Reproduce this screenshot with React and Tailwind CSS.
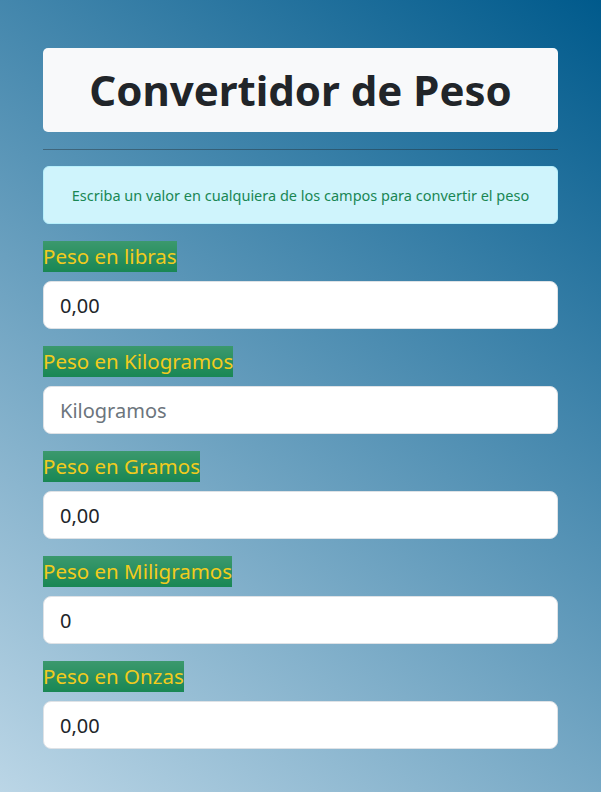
import React, { useState } from 'react';

const campos = [
    { id: 'libras', label: 'Peso en libras', value: '0,00', placeholder: 'Libras' },
    { id: 'kilogramos', label: 'Peso en Kilogramos', value: '', placeholder: 'Kilogramos' },
    { id: 'gramos', label: 'Peso en Gramos', value: '0,00', placeholder: 'Gramos' },
    { id: 'miligramos', label: 'Peso en Miligramos', value: '0', placeholder: 'Miligramos' },
    { id: 'onzas', label: 'Peso en Onzas', value: '0,00', placeholder: 'Onzas' },
];

const App = () => {
    const [valores, setValores] = useState(
        Object.fromEntries(campos.map((c) => [c.id, c.value]))
    );

    const handleChange = (id) => (e) => {
        setValores({ ...valores, [id]: e.target.value });
    };

    return (
        <div className="min-h-screen w-full bg-[linear-gradient(37deg,#bdd7e7_0%,#005a8c_100%)] font-['Segoe_UI','Noto_Sans',sans-serif] text-[#212529]">
            <div className="px-[43px] pt-[48px] pb-[40px]">
                {/* Encabezado */}
                <div className="flex h-[84px] items-center justify-center rounded-[5px] bg-[#f8f9fa]">
                    <h1 className="text-[42px] font-bold leading-none text-[#212529]">Convertidor de Peso</h1>
                </div>

                <hr className="mt-[17px] mb-4 border-t border-[#212529]/40" />

                {/* Mensaje */}
                <div className="mb-[17px] rounded-[6px] border border-[#b6effb] bg-[#cff4fc] py-4 text-center text-[14.5px] leading-6 text-[#198754]">
                    Escriba un valor en cualquiera de los campos para convertir el peso
                </div>

                {/* Campos */}
                {campos.map((campo) => (
                    <div key={campo.id} className="mb-[17px]">
                        <label
                            htmlFor={campo.id}
                            className="mb-[9px] inline-block h-[31px] bg-[#198754] bg-[linear-gradient(180deg,rgba(255,255,255,0.15),rgba(255,255,255,0))] text-[20.5px] leading-[31px] text-[#f2cb1d]"
                        >
                            {campo.label}
                        </label>
                        <input
                            id={campo.id}
                            type="text"
                            value={valores[campo.id]}
                            placeholder={campo.placeholder}
                            onChange={handleChange(campo.id)}
                            className="block h-[48px] w-full rounded-lg border border-[#dee2e6] bg-white px-4 text-[20px] text-[#212529] outline-none placeholder:text-[#6c757d]"
                        />
                    </div>
                ))}
            </div>
        </div>
    );
};

export default App;
